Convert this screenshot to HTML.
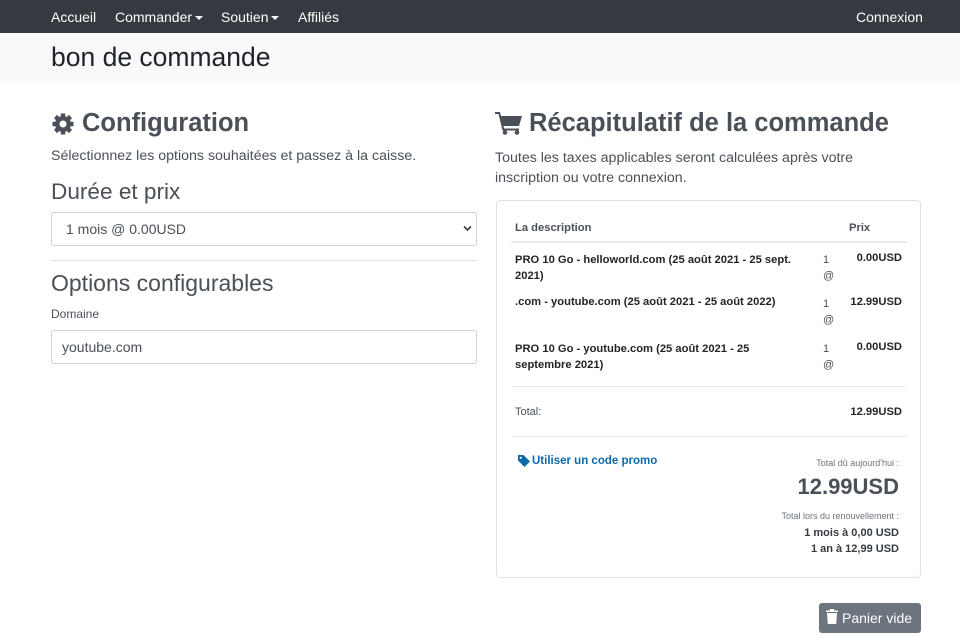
<!DOCTYPE html>
<html><head><meta charset="utf-8"><style>
*{box-sizing:border-box;margin:0;padding:0}
body{width:960px;height:640px;overflow:hidden;background:#fff;font-family:"Liberation Sans",sans-serif;color:#495057;position:relative}
.a{position:absolute;white-space:nowrap}
.nav{position:absolute;left:0;top:0;width:960px;height:33px;background:#343a40}
.nav span{position:absolute;top:9px;color:#fff;font-size:14px}
.car{display:inline-block;border-left:4px solid transparent;border-right:4px solid transparent;border-top:4px solid #fff;vertical-align:middle;margin-left:3px}
.band{position:absolute;left:0;top:33px;width:960px;height:48px;background:#f8f9fa}
.box{position:absolute;border:1px solid #ced4da;border-radius:3px;background:#fff}
.b{font-weight:bold;color:#212529;font-size:11.2px}
</style></head><body>
<div class="nav">
<span style="left:51px">Accueil</span>
<span style="left:115px">Commander<i class="car"></i></span>
<span style="left:221px">Soutien<i class="car"></i></span>
<span style="left:298px">Affiliés</span>
<span style="left:856px">Connexion</span>
</div>
<div class="band"></div>
<div class="a" style="left:51px;top:42px;font-size:26.5px;color:#212529">bon de commande</div>

<svg class="a" style="left:51px;top:112px" width="24" height="24" viewBox="0 0 24 24"><g fill="#4a5057"><circle cx="12" cy="12" r="8"/><g stroke="#4a5057" stroke-width="4.5"><line x1="12" y1="1.5" x2="12" y2="22.5"/><line x1="1.5" y1="12" x2="22.5" y2="12"/><line x1="4.5" y1="4.5" x2="19.5" y2="19.5"/><line x1="19.5" y1="4.5" x2="4.5" y2="19.5"/></g></g><circle cx="12" cy="12" r="3.5" fill="#fff"/></svg>
<div class="a" style="left:82px;top:109px;font-size:25.5px;font-weight:bold;color:#4a5057">Configuration</div>
<div class="a" style="left:51px;top:148px;font-size:14.2px">Sélectionnez les options souhaitées et passez à la caisse.</div>
<div class="a" style="left:51px;top:179px;font-size:22.6px">Durée et prix</div>
<div class="box" style="left:51px;top:212px;width:426px;height:34px"></div>
<div class="a" style="left:66px;top:221px;font-size:14px">1 mois @ 0.00USD</div>
<svg class="a" style="left:463px;top:225px" width="9" height="7"><path d="M1 1.5L4.5 5 8 1.5" stroke="#343a40" stroke-width="1.6" fill="none"/></svg>
<div class="a" style="left:51px;top:260px;width:426px;height:1px;background:#dee2e6"></div>
<div class="a" style="left:51px;top:270px;font-size:23px">Options configurables</div>
<div class="a" style="left:51px;top:307px;font-size:12px">Domaine</div>
<div class="box" style="left:51px;top:330px;width:426px;height:34px"></div>
<div class="a" style="left:62px;top:339px;font-size:14px">youtube.com</div>

<svg class="a" style="left:495px;top:111px" width="28" height="24" viewBox="0 0 28 24"><path d="M0 1h5l1 4h21l-3 10H8.5l.6 2.5H24v2H7.5L3.5 3H0z" fill="#4a5057"/><circle cx="10" cy="21.5" r="2.3" fill="#4a5057"/><circle cx="22" cy="21.5" r="2.3" fill="#4a5057"/></svg>
<div class="a" style="left:529px;top:109px;font-size:25.5px;font-weight:bold;color:#4a5057">Récapitulatif de la commande</div>
<div class="a" style="left:495px;top:148px;font-size:14.2px;line-height:20px">Toutes les taxes applicables seront calculées après votre<br>inscription ou votre connexion.</div>

<div class="a" style="left:496px;top:200px;width:425px;height:378px;border:1px solid #dee2e6;border-radius:4px"></div>
<div class="a b" style="left:515px;top:222px;color:#495057">La description</div>
<div class="a b" style="left:849px;top:222px;color:#495057">Prix</div>
<div class="a" style="left:511px;top:241px;width:396px;height:2px;background:#e9ecef"></div>
<div class="a b" style="left:515px;top:252px;line-height:16px">PRO 10 Go - helloworld.com (25 août 2021 - 25 sept.<br>2021)</div>
<div class="a b" style="left:515px;top:296px">.com - youtube.com (25 août 2021 - 25 août 2022)</div>
<div class="a b" style="left:515px;top:341px;line-height:16px">PRO 10 Go - youtube.com (25 août 2021 - 25<br>septembre 2021)</div>
<div class="a" style="left:823px;top:252px;font-size:11px;line-height:16px;color:#495057">1<br>@</div>
<div class="a" style="left:823px;top:296px;font-size:11px;line-height:16px;color:#495057">1<br>@</div>
<div class="a" style="left:823px;top:341px;font-size:11px;line-height:16px;color:#495057">1<br>@</div>
<div class="a b" style="right:58px;top:252px">0.00USD</div>
<div class="a b" style="right:58px;top:296px">12.99USD</div>
<div class="a b" style="right:58px;top:341px">0.00USD</div>
<div class="a" style="left:511px;top:386px;width:396px;height:1px;background:#e9ecef"></div>
<div class="a" style="left:515px;top:406px;font-size:11px;color:#495057">Total:</div>
<div class="a b" style="right:58px;top:406px">12.99USD</div>
<div class="a" style="left:511px;top:436px;width:396px;height:1px;background:#e9ecef"></div>
<svg class="a" style="left:518px;top:455px" width="12" height="12" viewBox="0 0 12 12"><path d="M0 0h5.5L12 6.5 6.5 12 0 5.5z" fill="#0b6aa8"/><circle cx="2.8" cy="2.8" r="1.1" fill="#fff"/></svg>
<div class="a" style="left:532px;top:455px;font-size:11.5px;font-weight:bold;color:#0b6aa8">Utiliser un code promo</div>
<div class="a" style="right:61px;top:458px;font-size:9px;color:#6c757d">Total dû aujourd'hui :</div>
<div class="a" style="right:61px;top:474px;font-size:22px;font-weight:bold;color:#4a5057">12.99USD</div>
<div class="a" style="right:61px;top:511px;font-size:9px;color:#6c757d">Total lors du renouvellement :</div>
<div class="a" style="right:61px;top:525px;font-size:11px;font-weight:bold;color:#343a40;text-align:right;line-height:16px">1 mois à 0,00 USD<br>1 an à 12,99 USD</div>

<div class="a" style="left:819px;top:603px;width:102px;height:30px;background:#6c757d;border-radius:3px"></div>
<svg class="a" style="left:826px;top:609px" width="12" height="15" viewBox="0 0 12 15"><path d="M0 1.5h3.5L4 0h4l.5 1.5H12V3H0zM1 4h10l-.8 11H1.8z" fill="#fff"/></svg>
<div class="a" style="left:842px;top:610px;font-size:14px;color:#fff">Panier vide</div>
</body></html>
